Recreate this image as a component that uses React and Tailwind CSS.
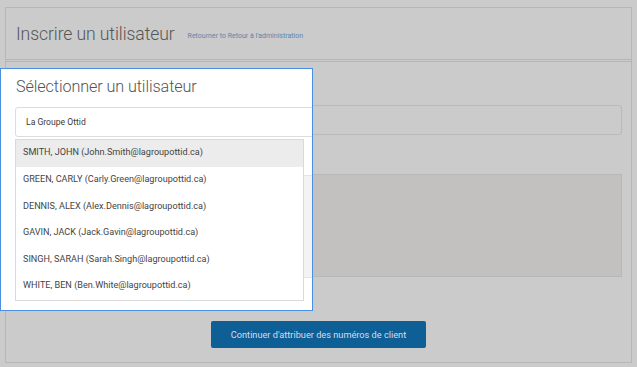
import React from "react";

const users = [
  { name: "SMITH, JOHN", email: "John.Smith@lagroupottid.ca" },
  { name: "GREEN, CARLY", email: "Carly.Green@lagroupottid.ca" },
  { name: "DENNIS, ALEX", email: "Alex.Dennis@lagroupottid.ca" },
  { name: "GAVIN, JACK", email: "Jack.Gavin@lagroupottid.ca" },
  { name: "SINGH, SARAH", email: "Sarah.Singh@lagroupottid.ca" },
  { name: "WHITE, BEN", email: "Ben.White@lagroupottid.ca" },
];

const UserPicker = () => (
  <div className="absolute left-0 top-[68px] w-[313px] h-[243px] bg-white border border-[#4a8fe0] overflow-hidden">
    {/* bright copy of the page box peeking at the edge */}
    <div className="absolute left-[302px] top-[106px] w-[40px] h-[103px] bg-[#f3f3f2] border border-[#e4e4e4]" />
    <div className="relative">
      <h3 className="pl-[15px] pt-[6px] text-[16.2px] leading-[24px] text-[#555] font-light tracking-[-0.1px]">
        Sélectionner un utilisateur
      </h3>
      <div className="ml-[14px] mt-[8px] w-[340px] h-[30px] border border-[#dcdcdc] rounded-[3px] flex items-center pl-[10px] text-[8.6px] text-[#3a3a3a] bg-white">
        La Groupe Ottid
      </div>
      <ul className="ml-[14px] mt-[2px] w-[289px] border border-[#dadada] bg-white">
        {users.map((u, i) => (
          <li
            key={u.email}
            className={`h-[26.6px] flex items-center pl-[7px] text-[9.1px] text-[#444] ${
              i === 0 ? "bg-[#ececec]" : ""
            }`}
          >
            {u.name} ({u.email})
          </li>
        ))}
      </ul>
    </div>
  </div>
);

export default function App() {
  return (
    <div
      className="relative w-[637px] h-[367px] bg-[#cbcbcb] overflow-hidden"
      style={{ fontFamily: "Roboto, 'Noto Sans', sans-serif" }}
    >
      <div className="absolute left-[5px] top-[7px] w-[627px] h-[356px] border border-[#b7b7b7] flex flex-col">
        <div className="h-[54px] border-b-[3px] border-double border-[#b5b5b5] flex items-center pl-[10px] pt-[2px]">
          <h2 className="text-[17.6px] text-[#565656] font-light tracking-[-0.1px]">Inscrire un utilisateur</h2>
          <a className="ml-[13px] mt-[4px] text-[7px] text-[#5b86aa]">
            Retourner to Retour à l'administration
          </a>
        </div>
        <div className="flex-1 px-[9px] flex flex-col">
          <div className="mt-[43px] h-[30px] border border-[#bababa] rounded-[3px]" />
          <div className="mt-[39px] h-[103px] bg-[#c2c1bf] border border-[#b8b8b8]" />
          <div className="flex justify-center mt-[44px]">
            <button className="w-[215px] h-[27px] bg-[#0f5f97] rounded-[2px] text-[9.2px] text-[#d2dde8]">
              Continuer d'attribuer des numéros de client
            </button>
          </div>
        </div>
      </div>
      <UserPicker />
    </div>
  );
}
